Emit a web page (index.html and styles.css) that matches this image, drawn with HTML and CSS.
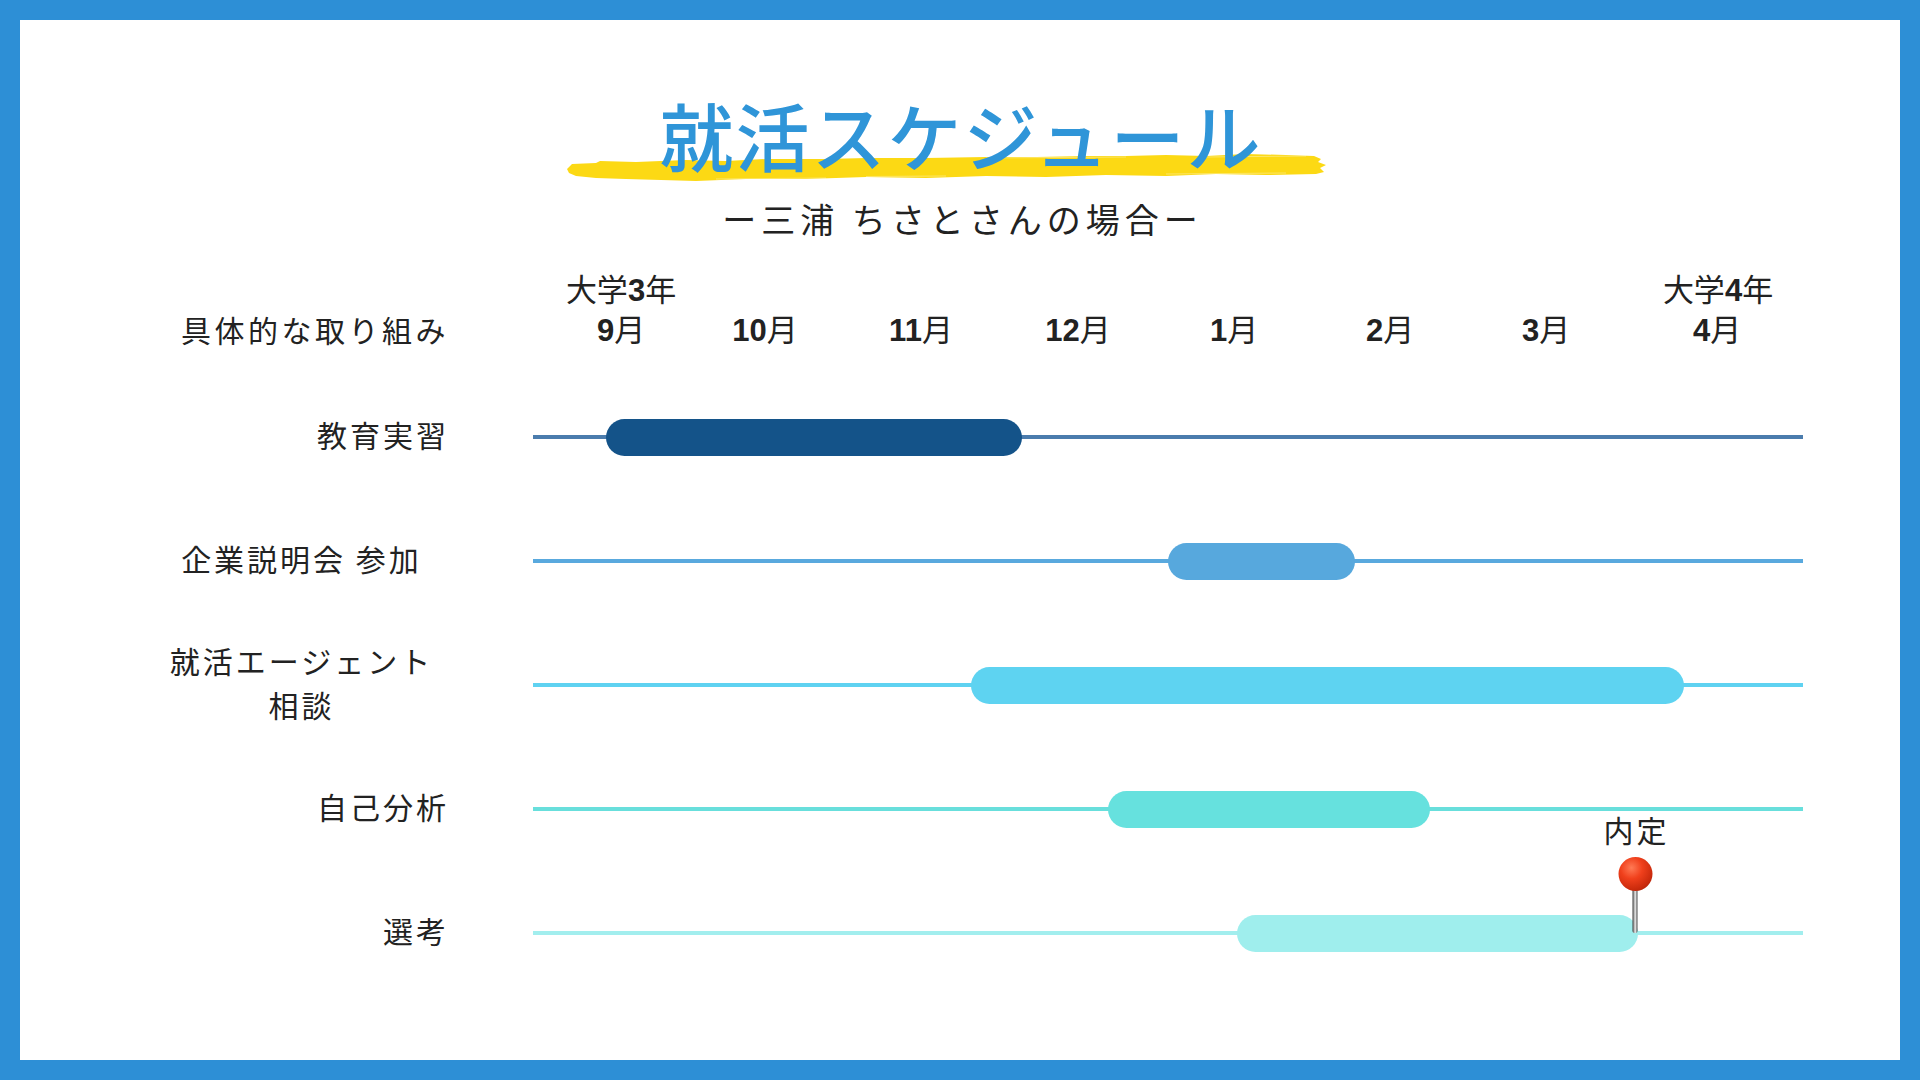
FILE: index.html
```html
<!DOCTYPE html>
<html lang="ja">
<head>
<meta charset="utf-8">
<title>就活スケジュール</title>
<link rel="stylesheet" href="styles.css">
</head>
<body>
<div class="page">
  <header class="head">
    <div class="title-wrap">
      <svg class="brush" viewBox="0 0 760 30" preserveAspectRatio="none" aria-hidden="true">
        <path fill="#fcd914" d="M1,17 L6,12 L30,11 L34,9 L70,10 L120,8 L160,9 L200,7 L260,7 L300,6 L360,6 L420,5 L470,5 L520,4 L560,4 L600,3 L640,4 L680,2 L720,3 L748,4 L755,7 L752,10 L760,13 L754,16 L758,20 L750,22 L700,23 L650,22 L600,24 L540,23 L480,25 L420,24 L360,26 L300,25 L240,27 L180,27 L130,29 L95,28 L60,27 L30,26 L10,24 L3,21 Z"/>
        <g stroke="#fff" stroke-opacity="0.45" stroke-width="0.8" fill="none">
          <path d="M420,6 L560,5"/>
          <path d="M600,22 L720,21"/>
          <path d="M150,27 L260,26"/>
          <path d="M640,5 L740,4"/>
          <path d="M300,24.5 L380,24"/>
        </g>
      </svg>
      <h1 class="title">就活スケジュール</h1>
    </div>
    <p class="subtitle">ー三浦 ちさとさんの場合ー</p>
  </header>

  <section class="chart">
    <div class="axis-row">
      <div class="label"></div>
      <div class="axis">
        <span class="tick" style="left:88px">大学<b>3</b>年</span>
        <span class="tick" style="left:1185px">大学<b>4</b>年</span>
      </div>
    </div>
    <div class="axis-row months">
      <div class="label right">具体的な取り組み</div>
      <div class="axis">
        <span class="tick" style="left:88px"><b>9</b>月</span>
        <span class="tick" style="left:232px"><b>10</b>月</span>
        <span class="tick" style="left:388px"><b>11</b>月</span>
        <span class="tick" style="left:545px"><b>12</b>月</span>
        <span class="tick" style="left:701px"><b>1</b>月</span>
        <span class="tick" style="left:857px"><b>2</b>月</span>
        <span class="tick" style="left:1013px"><b>3</b>月</span>
        <span class="tick" style="left:1184px"><b>4</b>月</span>
      </div>
    </div>

    <div class="row r1">
      <div class="label right">教育実習</div>
      <div class="track"><div class="line"></div><div class="bar" style="left:73px;width:416px"></div></div>
    </div>
    <div class="row r2">
      <div class="label center">企業説明会 参加</div>
      <div class="track"><div class="line"></div><div class="bar" style="left:635px;width:187px"></div></div>
    </div>
    <div class="row r3">
      <div class="label center">就活エージェント<br>相談</div>
      <div class="track"><div class="line"></div><div class="bar" style="left:438px;width:713px"></div></div>
    </div>
    <div class="row r4">
      <div class="label right">自己分析</div>
      <div class="track"><div class="line"></div><div class="bar" style="left:575px;width:322px"></div></div>
    </div>
    <div class="row r5">
      <div class="label right">選考</div>
      <div class="track">
        <div class="line"></div>
        <div class="bar" style="left:704px;width:401px"></div>
        <div class="pin" style="left:1102px">
          <span class="pin-label">内定</span>
          <span class="pin-head"></span>
          <span class="pin-needle"></span>
        </div>
      </div>
    </div>
  </section>
</div>
</body>
</html>
```

FILE: styles.css
```css
html, body {
  margin: 0;
  padding: 0;
}

body {
  width: 1920px;
  height: 1080px;
  font-family: "Noto Sans CJK JP", "Noto Sans", sans-serif;
  color: #222;
  background: #2d8fd6;
}

.page {
  box-sizing: border-box;
  width: 1920px;
  height: 1080px;
  border: 20px solid #2d8fd6;
  background: #fff;
  display: flex;
  flex-direction: column;
}

.head {
  display: flex;
  flex-direction: column;
  align-items: center;
  padding-top: 77px;
}

.title-wrap {
  position: relative;
}

.brush {
  position: absolute;
  left: -92px;
  top: 55px;
  width: 760px;
  height: 30px;
  z-index: 0;
}

.title {
  position: relative;
  z-index: 1;
  margin: 0;
  font-size: 74px;
  line-height: 74px;
  font-weight: 500;
  letter-spacing: 2px;
  padding-left: 2px;
  color: #2f95d8;
  white-space: nowrap;
}

.subtitle {
  margin: 31px 0 0;
  font-size: 34px;
  line-height: 34px;
  letter-spacing: 5px;
  padding-left: 5px;
  color: #222;
  white-space: nowrap;
}

.chart {
  display: flex;
  flex-direction: column;
  padding-left: 133px;
  margin-top: 39px;
}

.axis-row,
.row {
  display: grid;
  grid-template-columns: 297px 1270px;
  column-gap: 83px;
  align-items: center;
}

.axis-row {
  height: 32px;
}

.axis-row.months {
  margin-top: 2px;
  margin-bottom: 34px;
}

.axis {
  position: relative;
  height: 32px;
}

.tick {
  position: absolute;
  top: 0;
  transform: translateX(-50%);
  font-family: "Liberation Sans", "Noto Sans CJK JP", sans-serif;
  font-size: 31px;
  line-height: 32px;
  white-space: nowrap;
  color: #222;
}

.tick b {
  font-weight: 700;
}

.label {
  font-size: 30px;
  line-height: 44px;
  letter-spacing: 3px;
  color: #222;
  white-space: nowrap;
  position: relative;
  top: -3px;
}

.axis-row .label {
  letter-spacing: 3.5px;
  top: -2px;
}

.label.right {
  text-align: right;
  margin-right: 1px;
}

.label.center {
  text-align: center;
}

.row {
  height: 124px;
}

.track {
  position: relative;
  height: 100%;
  display: flex;
  align-items: center;
}

.line {
  width: 100%;
  height: 4px;
}

.bar {
  position: absolute;
  top: 50%;
  height: 37px;
  margin-top: -18.5px;
  border-radius: 19px;
}

.r1 .line { background: #4b7cad; }
.r1 .bar  { background: #145389; }
.r2 .line { background: #59a9de; }
.r2 .bar  { background: #57a8dd; }
.r3 .line { background: #5fd2f1; }
.r3 .bar  { background: #5ed3f1; }
.r4 .line { background: #68dfdc; }
.r4 .bar  { background: #66e1de; }
.r5 .line { background: #a2eeee; }
.r5 .bar  { background: #9feeed; }

.pin {
  position: absolute;
  bottom: 50%;
  transform: translateX(-50%);
  display: flex;
  flex-direction: column;
  align-items: center;
  z-index: 2;
}

.pin-label {
  font-size: 30px;
  line-height: 30px;
  letter-spacing: 3px;
  padding-left: 3px;
  color: #222;
  white-space: nowrap;
  margin-bottom: 13px;
}

.pin-head {
  width: 34px;
  height: 34px;
  border-radius: 50%;
  background: radial-gradient(circle at 38% 32%, #ff7a55 0%, #f0401c 35%, #c92a0c 70%, #8e1a05 100%);
  position: relative;
  z-index: 1;
}

.pin-needle {
  width: 5px;
  height: 44px;
  margin-top: -2px;
  border-radius: 0 0 2px 2px;
  background: linear-gradient(to right, #3a3a3a 0%, #bdbdbd 40%, #ececec 55%, #4a4a4a 100%);
}
```
